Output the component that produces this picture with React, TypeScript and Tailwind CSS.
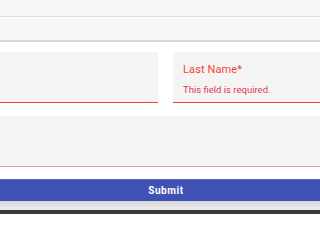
import React from "react";

const font = { fontFamily: "Roboto, 'Noto Sans', sans-serif" };

function FilledField({
  label,
  helper,
  className = "",
  lineClass = "border-[#f44336]",
}: {
  label?: string;
  helper?: string;
  className?: string;
  lineClass?: string;
}) {
  return (
    <div
      className={`bg-[#f4f4f4] rounded-t-[3px] border-b ${lineClass} flex flex-col ${className}`}
    >
      {label && (
        <div className="pl-[10px] pt-[11px] text-[11px] leading-[13px] tracking-[0.01em] text-[#f44336]">
          {label}
        </div>
      )}
      {helper && (
        <div className="pl-[10px] pt-[8px] text-[9.5px] leading-[12px] text-[#dc3a55]">
          {helper}
        </div>
      )}
    </div>
  );
}

export default function App() {
  return (
    <div className="w-[320px] h-[214px] overflow-hidden bg-white flex flex-col" style={font}>
      <div className="h-[17px] bg-[#f7f8fa] border-b border-[#dadada] shrink-0" />
      <div className="h-[24px] mt-[1px] bg-[#f8f8f8] border-b-2 border-[#d8d8d8] shrink-0" />

      <div className="mt-[10px] flex gap-[15px] shrink-0">
        <FilledField className="w-[158px] h-[51px]" />
        <FilledField
          className="flex-1 h-[51px] rounded-tr-none"
          label="Last Name*"
          helper="This field is required."
        />
      </div>

      <FilledField
        className="mt-[13px] h-[51px] shrink-0 rounded-none"
        lineClass="border-[#f49a94]"
      />

      <button className="mt-[12px] h-[22px] shrink-0 bg-[#3f51b5] border-t border-[#5665c0] pl-[12px] flex items-center justify-center text-white text-[10px] font-bold tracking-[0.06em]">
        Submit
      </button>

      <div className="h-[9px] shrink-0 bg-gradient-to-b from-[#d6d6d6] to-[#ececec]" />
      <div className="flex-1 bg-[#383838]" />
    </div>
  );
}
